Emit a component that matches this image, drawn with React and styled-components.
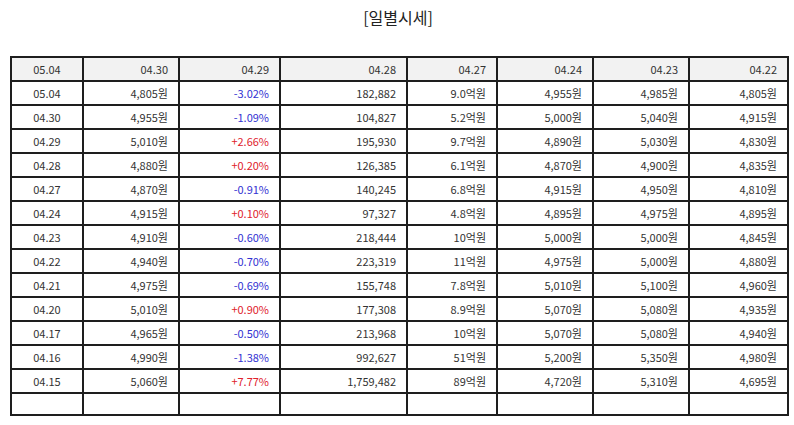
import React from "react";
import styled, { createGlobalStyle } from "styled-components";

const Global = createGlobalStyle`
  html, body { margin: 0; padding: 0; background: #fff; }
  body { font-family: "Noto Sans CJK KR", "Noto Sans", sans-serif; color: #333; }
`;

const Page = styled.div`
  width: 794px;
  padding: 0 8px 0 10px;
  box-sizing: border-box;
`;

const Title = styled.h2`
  margin: 0;
  padding-top: 6px;
  height: 56px;
  box-sizing: border-box;
  text-align: center;
  font-size: 16px;
  font-weight: 400;
  line-height: 22px;
  color: #222;
`;

const Table = styled.table`
  width: 777px;
  border-collapse: collapse;
  table-layout: fixed;
`;

const Row = styled.tr`
  height: ${(p) => (p.$short ? "22px" : "24px")};
`;

const Cell = styled.td`
  border: 2px solid #1e1e1e;
  padding: 0 10px;
  font-size: 11px;
  line-height: 14px;
  color: ${(p) => (p.$tone === "up" ? "#e0222c" : p.$tone === "down" ? "#3232d2" : "#333")};
  text-align: ${(p) => (p.$center ? "center" : "right")};
  background: ${(p) => (p.$head ? "#f2f2f2" : "#fff")};
  white-space: nowrap;
  overflow: hidden;
`;

const widths = [72, 96, 101, 127, 90, 96, 96, 99];
const header = ["05.04", "04.30", "04.29", "04.28", "04.27", "04.24", "04.23", "04.22"];

const rows = [
  ["05.04", "4,805원", "-3.02%", "182,882", "9.0억원", "4,955원", "4,985원", "4,805원"],
  ["04.30", "4,955원", "-1.09%", "104,827", "5.2억원", "5,000원", "5,040원", "4,915원"],
  ["04.29", "5,010원", "+2.66%", "195,930", "9.7억원", "4,890원", "5,030원", "4,830원"],
  ["04.28", "4,880원", "+0.20%", "126,385", "6.1억원", "4,870원", "4,900원", "4,835원"],
  ["04.27", "4,870원", "-0.91%", "140,245", "6.8억원", "4,915원", "4,950원", "4,810원"],
  ["04.24", "4,915원", "+0.10%", "97,327", "4.8억원", "4,895원", "4,975원", "4,895원"],
  ["04.23", "4,910원", "-0.60%", "218,444", "10억원", "5,000원", "5,000원", "4,845원"],
  ["04.22", "4,940원", "-0.70%", "223,319", "11억원", "4,975원", "5,000원", "4,880원"],
  ["04.21", "4,975원", "-0.69%", "155,748", "7.8억원", "5,010원", "5,100원", "4,960원"],
  ["04.20", "5,010원", "+0.90%", "177,308", "8.9억원", "5,070원", "5,080원", "4,935원"],
  ["04.17", "4,965원", "-0.50%", "213,968", "10억원", "5,070원", "5,080원", "4,940원"],
  ["04.16", "4,990원", "-1.38%", "992,627", "51억원", "5,200원", "5,350원", "4,980원"],
  ["04.15", "5,060원", "+7.77%", "1,759,482", "89억원", "4,720원", "5,310원", "4,695원"],
];

const toneOf = (v) => (v.startsWith("+") ? "up" : v.startsWith("-") ? "down" : undefined);

export default function App() {
  return (
    <Page>
      <Global />
      <Title>[일별시세]</Title>
      <Table>
        <colgroup>
          {widths.map((w, i) => (
            <col key={i} style={{ width: w }} />
          ))}
        </colgroup>
        <tbody>
          <Row>
            {header.map((h, i) => (
              <Cell key={i} $head $center={i === 0}>
                {h}
              </Cell>
            ))}
          </Row>
          {rows.map((r, ri) => (
            <Row key={ri}>
              {r.map((v, i) => (
                <Cell key={i} $center={i === 0} $tone={i === 2 ? toneOf(v) : undefined}>
                  {v}
                </Cell>
              ))}
            </Row>
          ))}
          <Row $short>
            {widths.map((_, i) => (
              <Cell key={i} />
            ))}
          </Row>
        </tbody>
      </Table>
    </Page>
  );
}
